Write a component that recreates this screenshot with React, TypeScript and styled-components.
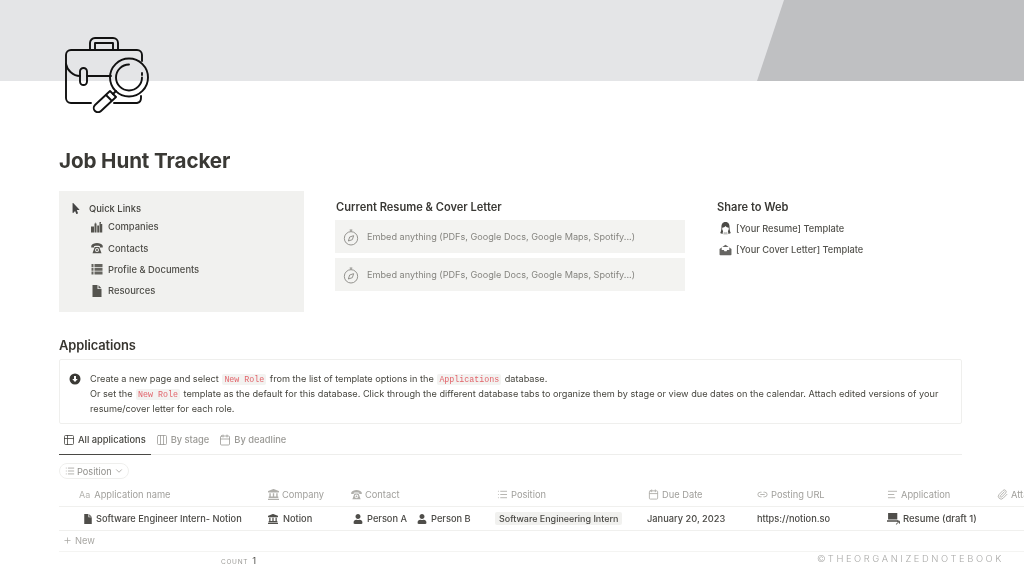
import React, { ReactNode } from 'react'
import styled, { createGlobalStyle } from 'styled-components'
import { FaLandmark, FaMousePointer, FaUser } from 'react-icons/fa'
import {
    AlignLeft,
    Calendar,
    ChevronDown,
    Columns3,
    Link2,
    List,
    Paperclip,
    Plus,
    Table2,
} from 'lucide-react'

const GlobalStyle = createGlobalStyle`
    html, body {
        margin: 0;
        padding: 0;
        background: #fff;
        overflow: hidden;
    }
    body {
        font-family: Inter, "Liberation Sans", sans-serif;
        color: #37352f;
    }
`

const Page = styled.div`
    position: relative;
    width: 1024px;
    height: 577px;
    overflow: hidden;
    filter: blur(0.3px);
`

const Banner = styled.div`
    position: relative;
    height: 81px;
    background: #e4e5e7;

    &::after {
        content: '';
        position: absolute;
        inset: 0;
        background: #bfc0c2;
        clip-path: polygon(784px 0, 100% 0, 100% 100%, 757px 100%);
    }
`

const Content = styled.div`
    padding-left: 59px;
`

const LogoSlot = styled.div`
    position: relative;
    z-index: 1;
    margin: -44px 0 0 5px;
    width: 88px;
    height: 76px;
`

const Title = styled.h1`
    margin: 35px 0 0;
    font-size: 20.6px;
    line-height: 26px;
    font-weight: 700;
    letter-spacing: -0.1px;
    color: #3a3935;
`

const Columns = styled.div`
    display: flex;
    margin-top: 17px;
`

const QuickBox = styled.div`
    width: 245px;
    height: 121px;
    box-sizing: border-box;
    padding: 10px 0 0 12px;
    background: #f1f1ef;
    flex-shrink: 0;
`

const QuickHead = styled.div`
    display: flex;
    align-items: center;
    height: 14px;
    font-size: 9.4px;
    font-weight: 500;
    color: #45443f;

    svg {
        width: 10px;
        height: 11px;
        margin-right: 8px;
        color: #444;
    }
`

const QuickList = styled.div`
    margin: 1px 0 0 20px;
    display: flex;
    flex-direction: column;
`

const QuickLink = styled.div`
    display: flex;
    align-items: center;
    height: 21.4px;
    gap: 5px;
    font-size: 9.4px;
    font-weight: 500;
    color: #4f4e49;

    svg {
        width: 12px;
        height: 12px;
        flex-shrink: 0;
        color: #55544f;
    }
`

const MiddleColumn = styled.div`
    width: 350px;
    margin-left: 31px;
    flex-shrink: 0;
`

const SideColumn = styled.div`
    margin-left: 32px;
`

const ColumnHead = styled.div`
    font-size: 11.1px;
    line-height: 14px;
    font-weight: 600;
    color: #3a3935;
    margin-top: 9px;
`

const MiddleHead = styled(ColumnHead)`
    padding-left: 1px;
`

const EmbedBox = styled.div<{ $first?: boolean }>`
    display: flex;
    align-items: center;
    height: 33px;
    margin-top: ${(props) => (props.$first ? '6px' : '5px')};
    padding-left: 8px;
    background: #f3f3f1;
    font-size: 9.15px;
    color: #85847f;

    svg {
        width: 16px;
        height: 18px;
        margin-right: 8px;
        color: #8d8c88;
    }
`

const ShareList = styled.div`
    margin-top: 4px;
    display: flex;
    flex-direction: column;
`

const ShareRow = styled.div`
    display: flex;
    align-items: center;
    gap: 4px;
    height: 21.3px;
    padding-left: 2px;
    font-size: 9.25px;
    font-weight: 500;
    color: #55544f;

    svg {
        width: 13px;
        height: 13px;
        color: #4b4a46;
    }
`

const SectionTitle = styled.h2`
    margin: 25px 0 0;
    font-size: 12.9px;
    line-height: 18px;
    font-weight: 600;
    letter-spacing: -0.1px;
    color: #37352f;
`

const Callout = styled.div`
    display: flex;
    width: 903px;
    height: 65px;
    box-sizing: border-box;
    margin-top: 4px;
    padding: 12px 0 0 9px;
    border: 1px solid #efefed;
    border-radius: 2px;
`

const CalloutIcon = styled.div`
    width: 12px;
    height: 12px;
    margin-top: 1px;
    margin-right: 9px;
    color: #3b3a36;
    flex-shrink: 0;

    svg {
        display: block;
        width: 12px;
        height: 12px;
    }
`

const CalloutText = styled.div`
    font-size: 9.17px;
    line-height: 14px;
    color: #47463f;
    white-space: nowrap;
`

const Code = styled.code`
    font-family: "Liberation Mono", monospace;
    font-size: 8.3px;
    color: #e2636a;
    background: #f3f3f1;
    border-radius: 2px;
    padding: 1px 2px;
    margin: 0 1px;
`

const Tabs = styled.div`
    display: flex;
    width: 903px;
    height: 30px;
    margin-top: 1px;
    box-sizing: border-box;
    border-bottom: 1px solid #eeeeec;
`

const Tab = styled.div<{ $active?: boolean }>`
    display: flex;
    align-items: center;
    gap: 3px;
    padding: 0 5px 0 ${(props) => (props.$active ? '4px' : '5px')};
    margin-bottom: -1px;
    font-size: 9.3px;
    font-weight: 500;
    color: ${(props) => (props.$active ? '#45443f' : '#9a9995')};
    border-bottom: 1px solid ${(props) => (props.$active ? '#4a4945' : 'transparent')};

    svg {
        width: 12px;
        height: 12px;
        stroke-width: 1.6;
    }
`

const FilterRow = styled.div`
    margin-top: 8px;
    height: 16px;
    display: flex;
`

const FilterPill = styled.div`
    display: flex;
    align-items: center;
    gap: 2px;
    padding: 0 4px 0 5px;
    font-size: 9.2px;
    color: #8f8e8a;
    border: 1px solid #efefed;
    border-radius: 9px;

    svg {
        width: 10px;
        height: 10px;
        color: #a3a29e;
    }
`

const TableGrid = styled.div`
    margin-top: 4px;
    width: 1000px;
`

const Row = styled.div<{ $height?: number }>`
    display: grid;
    grid-template-columns: 203px 83px 145px 152px 110px 130px 110px 67px;
    height: ${(props) => props.$height ?? 24}px;
    border-bottom: 1px solid #f0f0ee;
    box-sizing: border-box;
`

const HeadCell = styled.div<{ $indent?: number }>`
    display: flex;
    align-items: center;
    gap: 3px;
    padding-left: ${(props) => props.$indent ?? 6}px;
    font-size: 9.3px;
    color: #a09f9b;

    svg {
        width: 11px;
        height: 11px;
        flex-shrink: 0;
        color: #b0afab;
    }
`

const AaMark = styled.span`
    font-size: 9px;
    margin-right: 1px;
    color: #b5b4b0;
`

const BodyCell = styled.div<{ $indent?: number; $gap?: number }>`
    display: flex;
    align-items: center;
    gap: ${(props) => props.$gap ?? 4}px;
    padding-left: ${(props) => props.$indent ?? 6}px;
    font-size: 9.25px;
    font-weight: 500;
    color: #4a4945;
    white-space: nowrap;

    svg {
        width: 10px;
        height: 10px;
        flex-shrink: 0;
        color: #4f4e4a;
    }
`

const Person = styled.span`
    display: flex;
    align-items: center;
    gap: 4px;
`

const Tag = styled.span`
    padding: 1px 4px;
    border-radius: 2px;
    background: #f1f1ef;
    font-size: 8.95px;
    color: #4a4945;
`

const DraftLink = styled.span`
    display: flex;
    align-items: center;
    gap: 3px;
    font-size: 9.5px;

    svg {
        width: 13px;
        height: 13px;
    }
`

const NewRow = styled.div`
    display: flex;
    align-items: center;
    gap: 3px;
    padding: 0 0 2px 4px;
    height: 21px;
    box-sizing: border-box;
    border-bottom: 1px solid #f4f4f2;
    font-size: 9.3px;
    color: #a8a7a3;

    svg {
        width: 9px;
        height: 9px;
    }
`

const CountRow = styled.div`
    display: flex;
    align-items: baseline;
    gap: 4px;
    margin: 3px 0 0 162px;
    font-size: 6.5px;
    letter-spacing: 0.7px;
    color: #9a9995;
`

const CountValue = styled.span`
    font-size: 9.5px;
    letter-spacing: 0;
    color: #55544f;
`

const Watermark = styled.div`
    position: absolute;
    right: 20px;
    bottom: 13px;
    font-size: 9.4px;
    font-weight: 300;
    letter-spacing: 2.6px;
    color: #a9a9a7;
`

const Glyph = ({ children, view = 24 }: { children: ReactNode; view?: number }) => (
    <svg viewBox={`0 0 ${view} ${view}`} fill="currentColor" aria-hidden="true">
        {children}
    </svg>
)

const CityIcon = () => (
    <Glyph>
        <path d="M0 11h6v12H0zM7 5h4v18H7zM9 3h1v3H9zM12.500 9H16v14h-3.500zM17 2h3v3h-1v1h3.500v17H17z" />
    </Glyph>
)

const PhoneIcon = () => (
    <Glyph>
        <path d="M12 2C7 2 2 4 .5 7.500V11H6V8.300c3.800-1 8.200-1 12 0V11h5.500V7.500C22 4 17 2 12 2z" />
        <path
            fillRule="evenodd"
            d="M7.500 10h9L21 22.500H3zM12 12a4 4 0 1 0 0 8 4 4 0 0 0 0-8zm0 2a2 2 0 1 1 0 4 2 2 0 0 1 0-4z"
        />
    </Glyph>
)

const ServerIcon = () => (
    <Glyph>
        <path d="M1 2h4v6H1zM7 2h16v6H7zM1 9.500h4v6H1zM7 9.500h16v6H7zM1 17h4v6H1zM7 17h16v6H7z" opacity="0.9" />
    </Glyph>
)

const DocIcon = () => (
    <Glyph>
        <path d="M3 0h10v8h8v16H3zM15 .5 21 6.500h-6z" />
    </Glyph>
)

const CompassIcon = () => (
    <svg viewBox="0 0 24 26" fill="none" stroke="currentColor" strokeWidth="1.4" aria-hidden="true">
        <circle cx="12" cy="15" r="10" />
        <path d="M10 2.500h4M12 2.500V5" />
        <path d="M16 11l-2 6-6 2 2-6z" />
    </svg>
)

const WomanIcon = () => (
    <Glyph>
        <path
            fillRule="evenodd"
            d="M12 0C6.500 0 4.500 4 4.500 9.500c0 5-1 9-2.500 11l4.500 1.500 1-5.500C6 15 5.800 13 6 10.500c2.500 0 4.500-1 6-3 1.500 2 3.500 3 6 3 .2 2.500 0 4.500-1.500 6l1 5.500 4.500-1.500c-1.500-2-2.500-6-2.500-11C19.500 4 17.500 0 12 0z"
        />
        <path d="M9 18c2 1.500 4 1.500 6 0l1 5H8z" opacity="0.35" />
    </Glyph>
)

const InboxIcon = () => (
    <Glyph>
        <path d="M1 11 12 3l11 8v10a1.500 1.500 0 0 1-1.500 1.500h-19A1.500 1.500 0 0 1 1 21z" opacity="0.85" />
        <path d="M5 7.500h14V13h-4l-1 2h-4l-1-2H5z" fill="#fff" />
    </Glyph>
)

const LaptopArrowIcon = () => (
    <Glyph>
        <path d="M2 2h17v12H2zM0 15h21v3H0z" />
        <path d="M16.500 23l6-5.500M18.500 17h4.500v4.500" stroke="currentColor" strokeWidth="1.800" fill="none" />
    </Glyph>
)

const DownCircleIcon = () => (
    <Glyph>
        <path
            fillRule="evenodd"
            d="M12 1a11 11 0 1 0 0 22 11 11 0 0 0 0-22zm-2 5h4v6h3.500L12 18l-5.500-6H10z"
        />
    </Glyph>
)

// drawn on the logo's own 88x76 box, it straddles the banner edge
const BriefcaseLogo = () => (
    <svg
        viewBox="0 0 88 76"
        width="88"
        height="76"
        fill="none"
        stroke="#111"
        strokeWidth="1.900"
        strokeLinecap="round"
        strokeLinejoin="round"
        aria-hidden="true"
    >
        <path d="M26 13V6a5 5 0 0 1 5-5h18a5 5 0 0 1 5 5v7" />
        <path d="M31 13V6h18v7" />
        <path d="M78 24v-6a5 5 0 0 0-5-5H7a5 5 0 0 0-5 5v43a5 5 0 0 0 5 5h20" />
        <path d="M50 66h23a5 5 0 0 0 4-5v-2" />
        <path d="M2 27c1 6 7 12 14 12" />
        <path d="M23 39h24" />
        <rect x="16" y="31" width="7" height="17" rx="3.500" />
        <circle cx="65" cy="40.500" r="19" />
        <path d="M65 27.500a13 13 0 1 0 13 13" />
        <path d="M78 36v2" />
        <path d="M52 54l-3 3" />
        <path d="M46 54l6 6-15 14a4 4 0 0 1-6-6z" />
        <path d="M42 58l5 5" />
    </svg>
)

export default function App() {
    return (
        <Page>
            <GlobalStyle />
            <Banner />
            <Content>
                <LogoSlot>
                    <BriefcaseLogo />
                </LogoSlot>
                <Title>Job Hunt Tracker</Title>
                <Columns>
                    <QuickBox>
                        <QuickHead>
                            <FaMousePointer />
                            Quick Links
                        </QuickHead>
                        <QuickList>
                            <QuickLink>
                                <CityIcon />
                                Companies
                            </QuickLink>
                            <QuickLink>
                                <PhoneIcon />
                                Contacts
                            </QuickLink>
                            <QuickLink>
                                <ServerIcon />
                                Profile &amp; Documents
                            </QuickLink>
                            <QuickLink>
                                <DocIcon />
                                Resources
                            </QuickLink>
                        </QuickList>
                    </QuickBox>
                    <MiddleColumn>
                        <MiddleHead>Current Resume &amp; Cover Letter</MiddleHead>
                        <EmbedBox $first>
                            <CompassIcon />
                            Embed anything (PDFs, Google Docs, Google Maps, Spotify...)
                        </EmbedBox>
                        <EmbedBox>
                            <CompassIcon />
                            Embed anything (PDFs, Google Docs, Google Maps, Spotify...)
                        </EmbedBox>
                    </MiddleColumn>
                    <SideColumn>
                        <ColumnHead>Share to Web</ColumnHead>
                        <ShareList>
                            <ShareRow>
                                <WomanIcon />
                                [Your Resume] Template
                            </ShareRow>
                            <ShareRow>
                                <InboxIcon />
                                [Your Cover Letter] Template
                            </ShareRow>
                        </ShareList>
                    </SideColumn>
                </Columns>
                <SectionTitle>Applications</SectionTitle>
                <Callout>
                    <CalloutIcon>
                        <DownCircleIcon />
                    </CalloutIcon>
                    <CalloutText>
                        Create a new page and select <Code>New Role</Code> from the list of
                        template options in the <Code>Applications</Code> database.
                        <br />
                        Or set the <Code>New Role</Code> template as the default for this
                        database. Click through the different database tabs to organize them by
                        stage or view due dates on the calendar. Attach edited versions of your
                        <br />
                        resume/cover letter for each role.
                    </CalloutText>
                </Callout>
                <Tabs>
                    <Tab $active>
                        <Table2 />
                        All applications
                    </Tab>
                    <Tab>
                        <Columns3 />
                        By stage
                    </Tab>
                    <Tab>
                        <Calendar />
                        By deadline
                    </Tab>
                </Tabs>
                <FilterRow>
                    <FilterPill>
                        <List />
                        Position
                        <ChevronDown />
                    </FilterPill>
                </FilterRow>
                <TableGrid>
                    <Row>
                        <HeadCell $indent={20}>
                            <AaMark>Aa</AaMark>
                            Application name
                        </HeadCell>
                        <HeadCell>
                            <FaLandmark />
                            Company
                        </HeadCell>
                        <HeadCell>
                            <PhoneIcon />
                            Contact
                        </HeadCell>
                        <HeadCell $indent={7}>
                            <List />
                            Position
                        </HeadCell>
                        <HeadCell>
                            <Calendar />
                            Due Date
                        </HeadCell>
                        <HeadCell $indent={5}>
                            <Link2 />
                            Posting URL
                        </HeadCell>
                        <HeadCell $indent={5}>
                            <AlignLeft />
                            Application
                        </HeadCell>
                        <HeadCell $indent={5}>
                            <Paperclip />
                            Attachments
                        </HeadCell>
                    </Row>
                    <Row>
                        <BodyCell $indent={24} $gap={3}>
                            <DocIcon />
                            Software Engineer Intern- Notion
                        </BodyCell>
                        <BodyCell $gap={5}>
                            <FaLandmark />
                            Notion
                        </BodyCell>
                        <BodyCell $indent={8} $gap={10}>
                            <Person>
                                <FaUser />
                                Person A
                            </Person>
                            <Person>
                                <FaUser />
                                Person B
                            </Person>
                        </BodyCell>
                        <BodyCell $indent={5}>
                            <Tag>Software Engineering Intern</Tag>
                        </BodyCell>
                        <BodyCell $indent={5}>January 20, 2023</BodyCell>
                        <BodyCell $indent={5}>https://notion.so</BodyCell>
                        <BodyCell $indent={5}>
                            <DraftLink>
                                <LaptopArrowIcon />
                                Resume (draft 1)
                            </DraftLink>
                        </BodyCell>
                        <BodyCell />
                    </Row>
                    <NewRow>
                        <Plus />
                        New
                    </NewRow>
                    <CountRow>
                        COUNT <CountValue>1</CountValue>
                    </CountRow>
                </TableGrid>
            </Content>
            <Watermark>©THEORGANIZEDNOTEBOOK</Watermark>
        </Page>
    )
}
